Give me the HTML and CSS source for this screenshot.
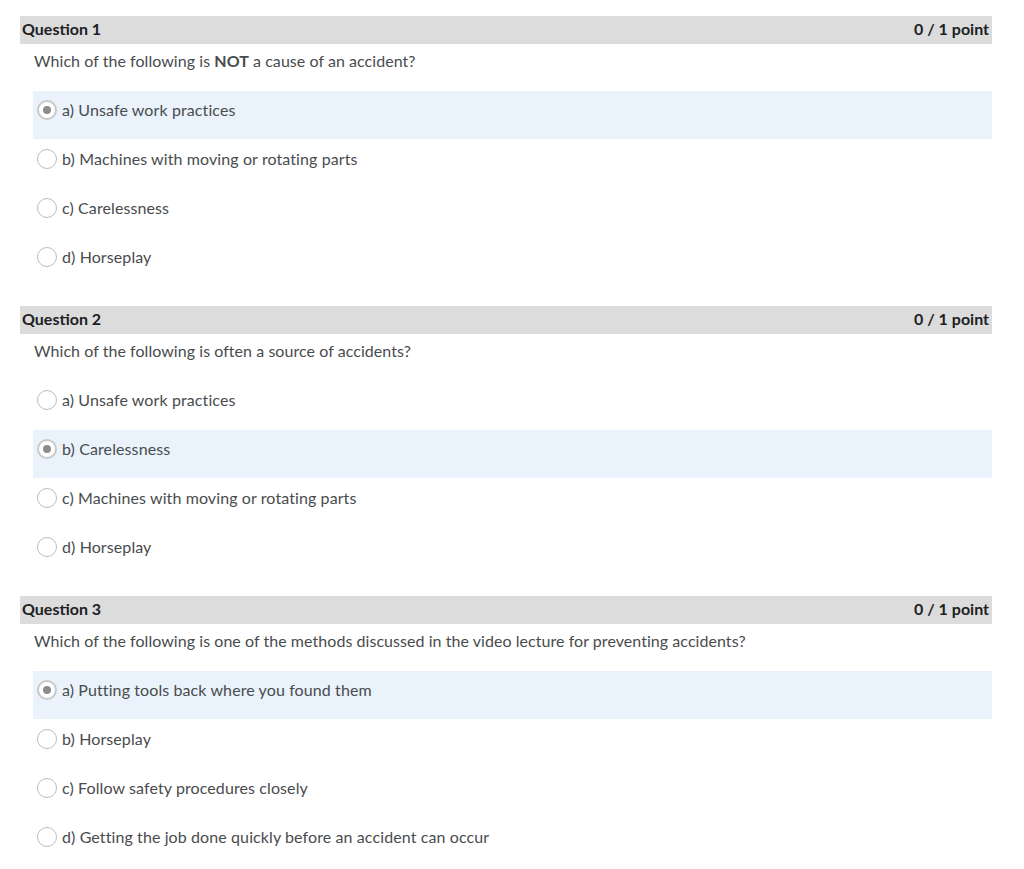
FILE: index.html
```html
<!DOCTYPE html>
<html>
<head>
<meta charset="utf-8">
<link rel="stylesheet" href="styles.css">
</head>
<body>
<div class="quiz">
  <section class="question">
    <div class="q-head"><span>Question 1</span><span>0 / 1 point</span></div>
    <p class="q-text">Which of the following is <b>NOT</b> a cause of an accident?</p>
    <div class="options">
      <div class="opt selected"><span class="radio"></span><span>a) Unsafe work practices</span></div>
      <div class="opt"><span class="radio"></span><span>b) Machines with moving or rotating parts</span></div>
      <div class="opt"><span class="radio"></span><span>c) Carelessness</span></div>
      <div class="opt"><span class="radio"></span><span>d) Horseplay</span></div>
    </div>
  </section>
  <section class="question">
    <div class="q-head"><span>Question 2</span><span>0 / 1 point</span></div>
    <p class="q-text">Which of the following is often a source of accidents?</p>
    <div class="options">
      <div class="opt"><span class="radio"></span><span>a) Unsafe work practices</span></div>
      <div class="opt selected"><span class="radio"></span><span>b) Carelessness</span></div>
      <div class="opt"><span class="radio"></span><span>c) Machines with moving or rotating parts</span></div>
      <div class="opt"><span class="radio"></span><span>d) Horseplay</span></div>
    </div>
  </section>
  <section class="question">
    <div class="q-head"><span>Question 3</span><span>0 / 1 point</span></div>
    <p class="q-text">Which of the following is one of the methods discussed in the video lecture for preventing accidents?</p>
    <div class="options">
      <div class="opt selected"><span class="radio"></span><span>a) Putting tools back where you found them</span></div>
      <div class="opt"><span class="radio"></span><span>b) Horseplay</span></div>
      <div class="opt"><span class="radio"></span><span>c) Follow safety procedures closely</span></div>
      <div class="opt"><span class="radio"></span><span>d) Getting the job done quickly before an accident can occur</span></div>
    </div>
  </section>
</div>
</body>
</html>
```

FILE: styles.css
```css
html, body {
  margin: 0;
  padding: 0;
  background: #ffffff;
}
body {
  font-family: Lato, "Open Sans", sans-serif;
  color: #494c4e;
  font-size: 16px;
  letter-spacing: 0.1px;
}
.quiz {
  width: 972px;
  margin-left: 20px;
  padding-top: 16px;
  display: flex;
  flex-direction: column;
  gap: 20px;
}
.q-head {
  height: 28px;
  box-sizing: border-box;
  background: #dcdcdc;
  display: flex;
  justify-content: space-between;
  align-items: center;
  padding: 0 3px 3px 2px;
  font-weight: bold;
  font-size: 16px;
  letter-spacing: 0;
  color: #202122;
}
.q-text {
  margin: 6px 0 19px 14px;
  line-height: 22px;
  letter-spacing: 0.05px;
}
.options {
  margin-left: 13px;
  display: flex;
  flex-direction: column;
  gap: 1px;
}
.opt {
  height: 48px;
  box-sizing: border-box;
  padding: 9px 0 0 4px;
  display: flex;
  align-items: flex-start;
  gap: 5px;
  line-height: 20px;
}
.opt.selected {
  background: #eaf2fb;
}
.radio {
  width: 20px;
  height: 20px;
  box-sizing: border-box;
  border: 1px solid #bcbcbc;
  border-radius: 50%;
  background: #fff;
  flex: none;
  display: flex;
  align-items: center;
  justify-content: center;
}
.selected .radio {
  border: 2px solid #c8c8c8;
}
.selected .radio::after {
  content: "";
  width: 8px;
  height: 8px;
  border-radius: 50%;
  background: #8c8c8c;
}
```
